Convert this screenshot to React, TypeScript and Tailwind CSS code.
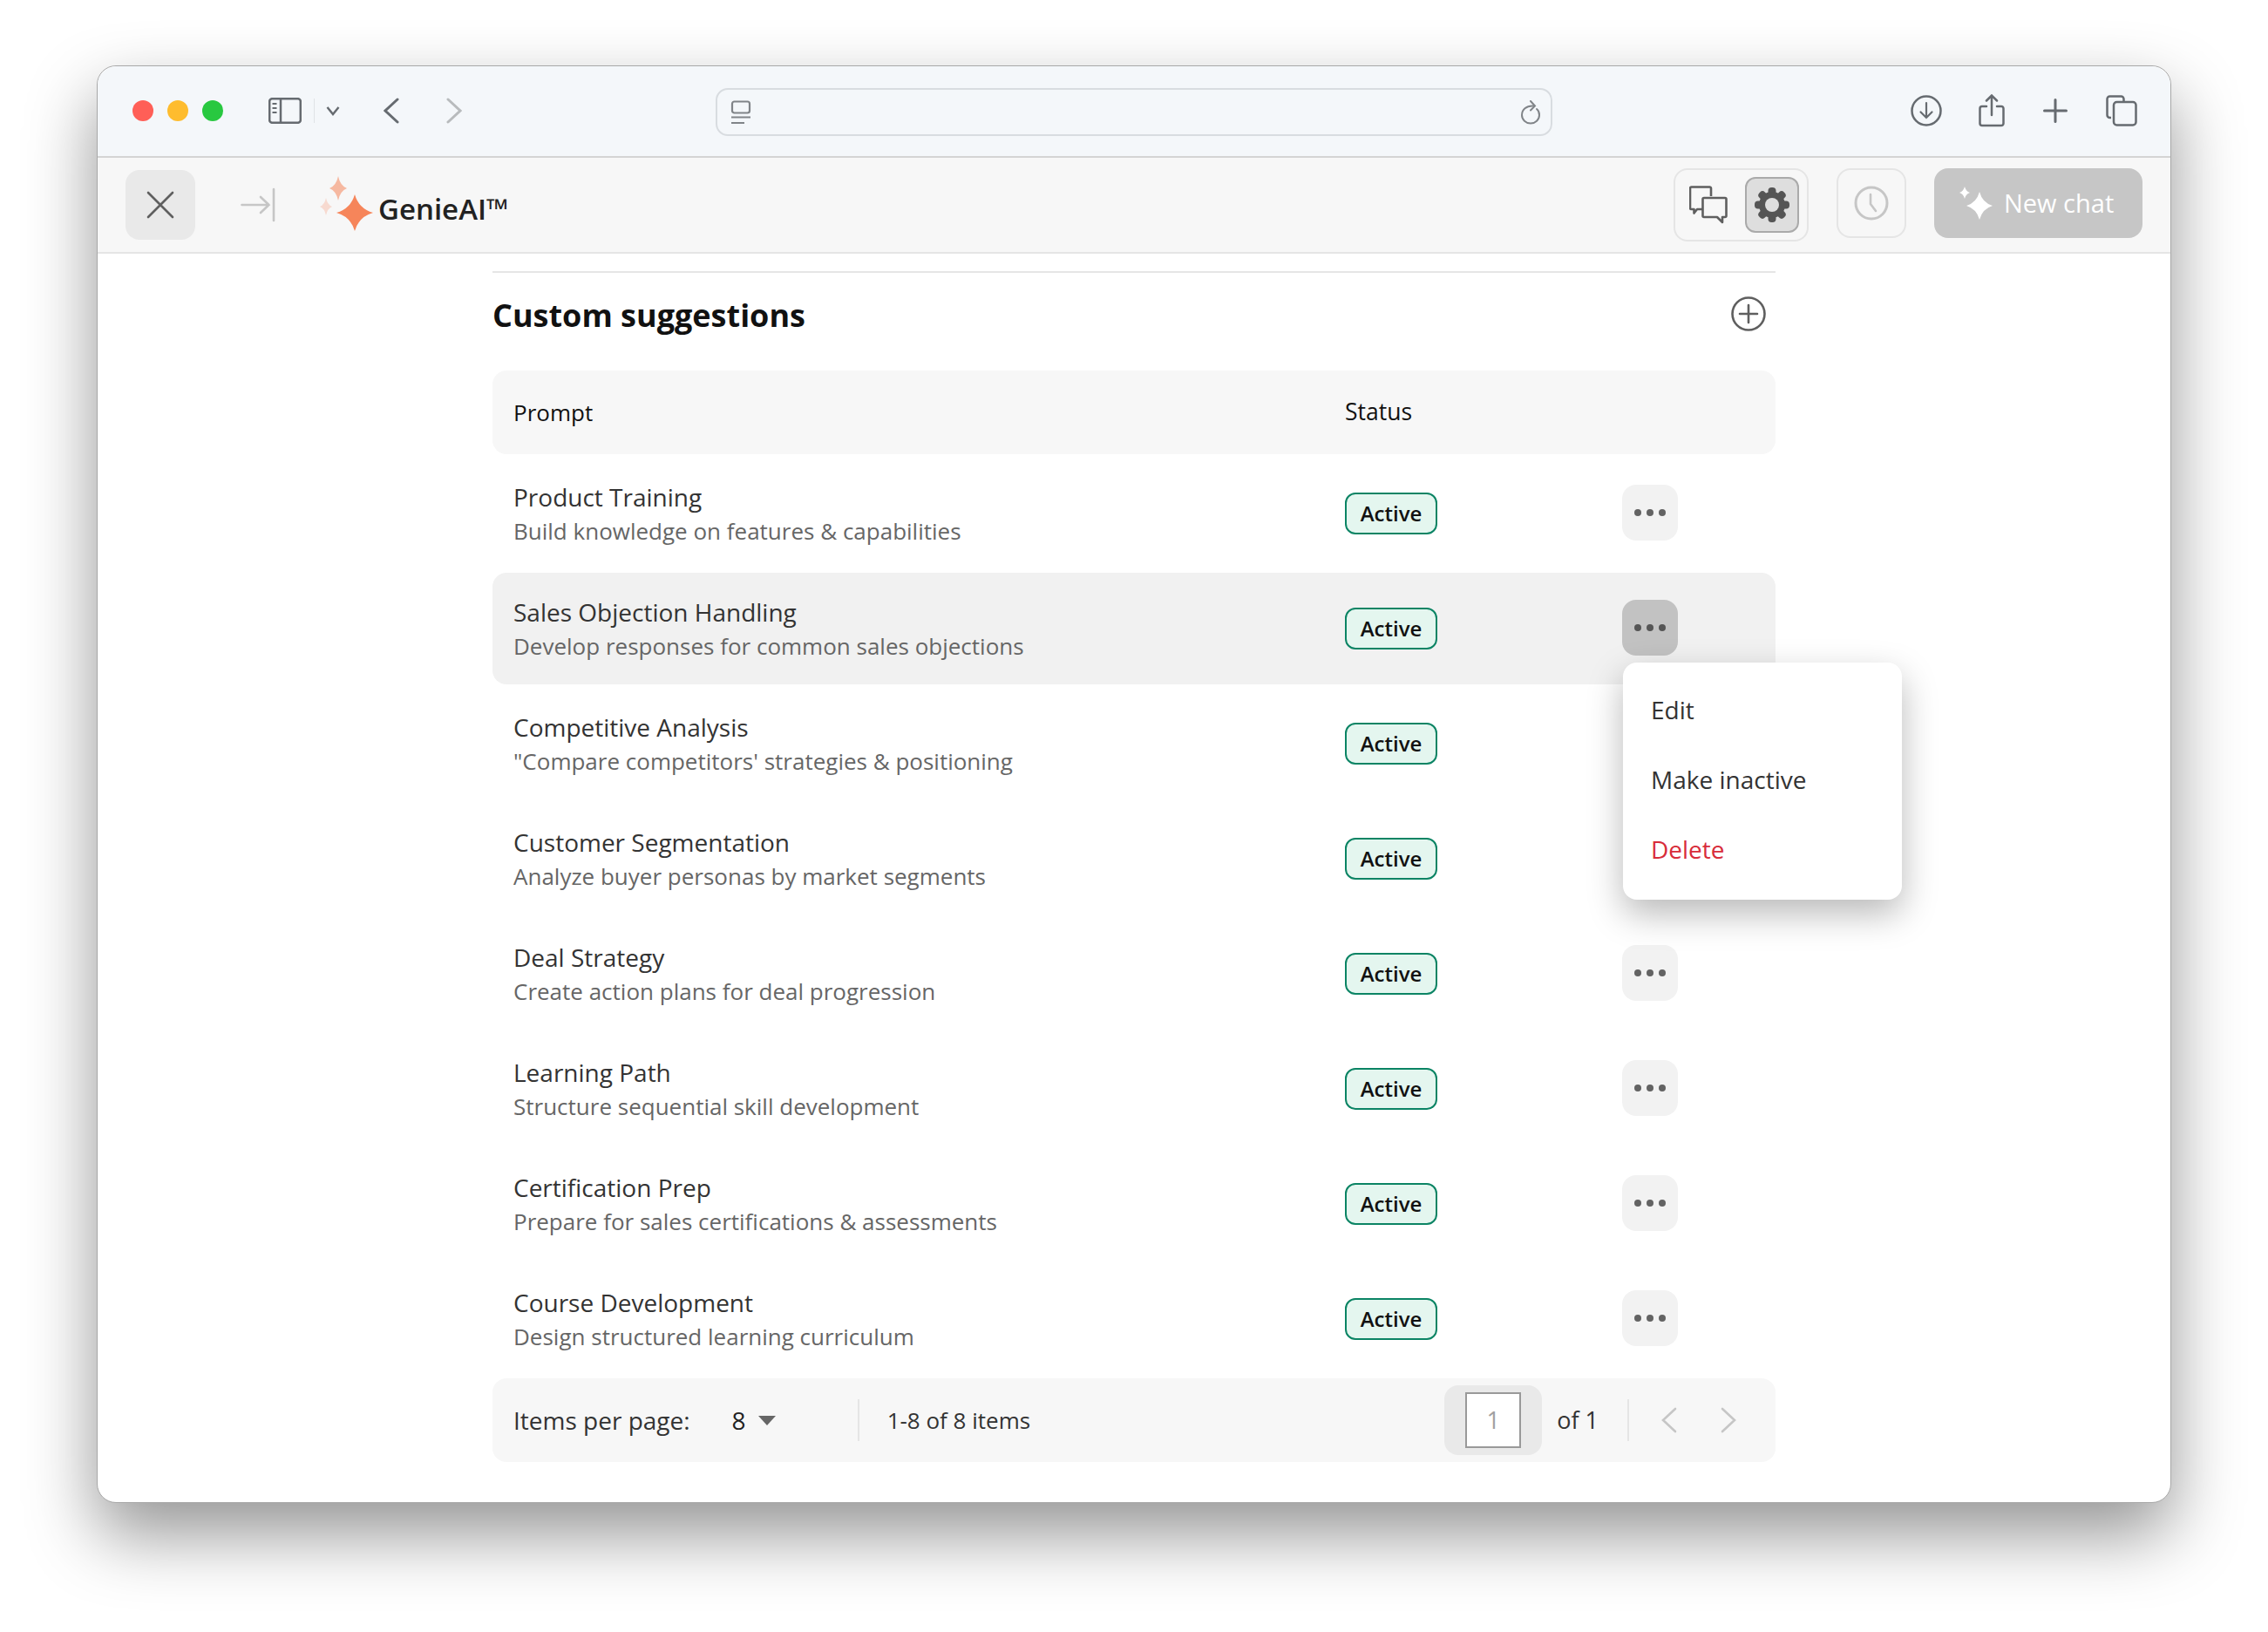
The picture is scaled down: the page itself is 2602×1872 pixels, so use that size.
import React from "react";

function Star({ cx, cy, r, ry, fill, opacity = 1 }: { cx: number; cy: number; r: number; ry?: number; fill: string; opacity?: number }) {
  const v = ry ?? r;
  const kx = r * 0.22;
  const ky = v * 0.22;
  return (
    <path
      d={`M${cx} ${cy - v}Q${cx + kx} ${cy - ky} ${cx + r} ${cy}Q${cx + kx} ${cy + ky} ${cx} ${cy + v}Q${cx - kx} ${cy + ky} ${cx - r} ${cy}Q${cx - kx} ${cy - ky} ${cx} ${cy - v}Z`}
      fill={fill}
      opacity={opacity}
    />
  );
}

const rows = [
  ["Product Training", "Build knowledge on features & capabilities"],
  ["Sales Objection Handling", "Develop responses for common sales objections"],
  ["Competitive Analysis", "\"Compare competitors' strategies & positioning"],
  ["Customer Segmentation", "Analyze buyer personas by market segments"],
  ["Deal Strategy", "Create action plans for deal progression"],
  ["Learning Path", "Structure sequential skill development"],
  ["Certification Prep", "Prepare for sales certifications & assessments"],
  ["Course Development", "Design structured learning curriculum"],
];

function Dots({ color }: { color: string }) {
  return (
    <svg width="36" height="10" viewBox="0 0 36 10">
      <circle cx="4" cy="5" r="4" fill={color} />
      <circle cx="18" cy="5" r="4" fill={color} />
      <circle cx="32" cy="5" r="4" fill={color} />
    </svg>
  );
}

function Gear() {
  const angles = [0, 45, 90, 135, 180, 225, 270, 315];
  return (
    <svg width="42" height="42" viewBox="0 0 42 42">
      {angles.map((a) => (
        <rect key={a} x="16.5" y="1" width="9" height="12" rx="4" fill="#555555" transform={`rotate(${a} 21 21)`} />
      ))}
      <circle cx="21" cy="21" r="15" fill="#555555" />
      <circle cx="21" cy="21" r="8" fill="#dedede" />
    </svg>
  );
}

function Row({ title, desc, index }: { title: string; desc: string; index: number }) {
  const active = index === 1;
  const hidden = index === 2 || index === 3;
  return (
    <div className={`relative grid h-[128px] grid-cols-[954px_318px_1fr] items-center rounded-2xl px-6 ${active ? "bg-[#f1f1f1]" : ""}`}>
      <div className="flex flex-col pt-[2px]">
        <div className="text-[28px] leading-[39px] text-[#333333]">{title}</div>
        <div className="text-[26px] leading-[39px] text-[#666666]">{desc}</div>
      </div>
      <div className="mb-[1px] flex">
        <span className="flex h-[48px] w-[106px] items-center justify-center rounded-xl border-2 border-[#0b8464] bg-[#e4f6ef] text-[24px] font-semibold text-[#111111]">Active</span>
      </div>
      {!hidden && (
        <div className={`mb-[2px] flex h-[64px] w-[64px] items-center justify-center rounded-2xl ${active ? "bg-[#c2c2c2]" : "bg-[#f2f2f2]"}`}>
          <Dots color={active ? "#555555" : "#636363"} />
        </div>
      )}
      {active && (
        <div className="absolute left-[1297px] top-[103px] z-10 flex w-[320px] flex-col rounded-2xl bg-white pb-[18px] pt-[14px] shadow-[0_16px_40px_rgba(0,0,0,0.28)]">
          <div className="flex h-[80px] items-center pl-8 text-[28px] text-[#333333]">Edit</div>
          <div className="flex h-[80px] items-center pl-8 text-[28px] text-[#333333]">Make inactive</div>
          <div className="flex h-[80px] items-center pl-8 text-[28px] text-[#d82c3a]">Delete</div>
        </div>
      )}
    </div>
  );
}

export default function App() {
  return (
    <div className="h-[1872px] w-[2602px] overflow-hidden bg-white pl-[111px] pt-[75px] font-['Open_Sans',sans-serif]">
      <div className="flex h-[1649px] w-[2380px] flex-col rounded-[22px] border border-[#a8a8a8] bg-white shadow-[0_36px_80px_rgba(0,0,0,0.42)]">
        {/* Safari bar */}
        <div className="relative flex h-[105px] shrink-0 items-center rounded-t-[22px] border-b-2 border-[#d4d4d4] bg-[#f4f7fa] pb-[2px] pl-[40px] pr-[38px]">
          <div className="flex gap-4">
            <span className="h-6 w-6 rounded-full bg-[#ff5f57]" />
            <span className="h-6 w-6 rounded-full bg-[#febc2e]" />
            <span className="h-6 w-6 rounded-full bg-[#28c840]" />
          </div>
          <svg className="ml-[52px]" width="38" height="30" viewBox="0 0 38 30" fill="none" stroke="#666b70" strokeWidth="2.5">
            <rect x="1.2" y="1.2" width="35.6" height="27.6" rx="3" />
            <path d="M14 1v28" />
            <path d="M4.5 7h5M4.5 12h5M4.5 17h5" strokeWidth="1.8" />
          </svg>
          <div className="ml-[14px] h-[28px] w-px bg-[#dfe3e6]" />
          <svg className="ml-[13px]" width="16" height="12" viewBox="0 0 16 12" fill="none" stroke="#666b70" strokeWidth="2.4">
            <path d="M1.5 2l6.5 8 6.5-8" />
          </svg>
          <svg className="ml-[50px]" width="18" height="30" viewBox="0 0 18 30" fill="none" stroke="#666b70" strokeWidth="3" strokeLinecap="round">
            <path d="M16 2L2 15l14 13" />
          </svg>
          <svg className="ml-[54px]" width="18" height="30" viewBox="0 0 18 30" fill="none" stroke="#b8bbbd" strokeWidth="3" strokeLinecap="round">
            <path d="M2 2l14 13L2 28" />
          </svg>
          <div className="absolute left-[709px] top-[25px] flex h-[55px] w-[960px] items-center justify-between rounded-[14px] border-2 border-[#d8dce0] pl-[15px] pr-[11px]">
            <svg width="24" height="28" viewBox="0 0 24 28" fill="none" stroke="#808488" strokeWidth="2.2">
              <rect x="2" y="1.5" width="20" height="13" rx="2.5" />
              <path d="M1 19.5h22M1 26h15" />
            </svg>
            <svg width="24" height="28" viewBox="0 0 24 28" fill="none" stroke="#808488" strokeWidth="2" strokeLinecap="round">
              <path d="M15 6.5C7 6 2 11 2 17a10 9.5 0 0 0 20 0c0-3-1-5.5-3-7" />
              <path d="M12 1l5 5.5-5 5" />
            </svg>
          </div>
          <div className="ml-auto flex items-center">
            <svg width="36" height="36" viewBox="0 0 36 36" fill="none" stroke="#666b70" strokeWidth="2.5" strokeLinecap="round">
              <circle cx="18" cy="18" r="16.5" />
              <path d="M18 9v17M11.5 19.5L18 26l6.5-6.5" strokeWidth="2.2" />
            </svg>
            <svg className="ml-[42px]" width="30" height="38" viewBox="0 0 30 38" fill="none" stroke="#666b70" strokeWidth="2.5" strokeLinecap="round">
              <path d="M9 14H4a2.5 2.5 0 0 0-2.5 2.5v17A2.5 2.5 0 0 0 4 36h22a2.5 2.5 0 0 0 2.5-2.5v-17A2.5 2.5 0 0 0 26 14h-5" />
              <path d="M15 24V2M9 7.5L15 1.5l6 6" />
            </svg>
            <svg className="ml-[44px]" width="28" height="28" viewBox="0 0 28 28" fill="none" stroke="#666b70" strokeWidth="3" strokeLinecap="round">
              <path d="M14 1.5v25M1.5 14h25" />
            </svg>
            <svg className="ml-[44px]" width="36" height="36" viewBox="0 0 36 36" fill="none" stroke="#666b70" strokeWidth="2.5">
              <path d="M6 26H4.5A3 3 0 0 1 1.5 23V4.5a3 3 0 0 1 3-3h13a3 3 0 0 1 3 3V8" />
              <rect x="9" y="8" width="25.5" height="26.5" rx="3.5" />
            </svg>
          </div>
        </div>

        {/* App header */}
        <div className="flex h-[110px] shrink-0 items-center border-b-2 border-[#e5e5e5] bg-[#f7f7f7] pl-[32px] pr-[32px]">
          <div className="flex h-[80px] w-[80px] items-center justify-center rounded-2xl bg-[#e9e9e9]">
            <svg width="32" height="32" viewBox="0 0 32 32" fill="none" stroke="#5f5f5f" strokeWidth="2.6" strokeLinecap="round">
              <path d="M2 2l28 28M30 2L2 30" />
            </svg>
          </div>
          <svg className="ml-[52px]" width="40" height="40" viewBox="0 0 40 40" fill="none" stroke="#c6c6c6" strokeWidth="2.6" strokeLinecap="round">
            <path d="M1.5 20h31M23 11l9.5 9-9.5 9" />
            <path d="M38 2v36" />
          </svg>
          <svg className="ml-[45px] mt-[2px]" width="76" height="76" viewBox="0 0 76 76">
            <Star cx={46} cy={46} r={21} ry={21} fill="#f6855a" />
            <Star cx={27} cy={18} r={10} ry={14} fill="#f6855a" opacity={0.55} />
            <Star cx={13} cy={39} r={7} ry={10} fill="#f6855a" opacity={0.25} />
          </svg>
          <div className="ml-[-3px] mt-[8px] text-[33px] font-semibold leading-none text-[#222222]">GenieAI™</div>
          <div className="ml-auto flex items-start gap-[32px] self-start pt-[12px]">
            <div className="flex h-[84px] w-[155px] items-center justify-between rounded-2xl border-2 border-[#e5e5e5] pl-[16px] pr-[9px]">
              <svg width="44" height="44" viewBox="0 0 44 44" fill="none" stroke="#5f5f5f" strokeWidth="2.6" strokeLinejoin="round">
                <path d="M15 27H9l-3.5 4.5V27H2.5A1.5 1.5 0 0 1 1 25.5V3a1.5 1.5 0 0 1 1.5-1.5h21A1.5 1.5 0 0 1 25 3v9" />
                <path d="M17 14h24a1.5 1.5 0 0 1 1.5 1.5v19a1.5 1.5 0 0 1-1.5 1.5h-3v6l-6-6H17a1.5 1.5 0 0 1-1.5-1.5v-19A1.5 1.5 0 0 1 17 14z" />
              </svg>
              <div className="flex h-[64px] w-[62px] items-center justify-center rounded-xl border-2 border-[#aaaaaa] bg-[#dedede]">
                <Gear />
              </div>
            </div>
            <div className="flex h-[80px] w-[80px] items-center justify-center rounded-2xl border-2 border-[#e5e5e5]">
              <svg width="40" height="40" viewBox="0 0 40 40" fill="none" stroke="#c6c6c6" strokeWidth="3" strokeLinecap="round" strokeLinejoin="round">
                <circle cx="20" cy="20" r="18" />
                <path d="M19 10v11l6 8" strokeWidth="2.6" />
              </svg>
            </div>
            <div className="flex h-[80px] w-[239px] items-center rounded-2xl bg-[#c6c6c6] pl-[28px] text-white">
              <svg width="40" height="38" viewBox="0 0 40 38">
                <Star cx={24} cy={22} r={15} ry={16} fill="#ffffff" />
                <Star cx={7} cy={7} r={6} ry={7} fill="#ffffff" />
              </svg>
              <span className="mb-[2px] ml-[12px] text-[29px] leading-none">New chat</span>
            </div>
          </div>
        </div>

        {/* Content */}
        <div className="mx-auto flex w-[1472px] flex-col pt-[20px]">
          <div className="h-[2px] bg-[#e5e5e5]" />
          <div className="flex h-[112px] items-center justify-between pr-[11px]">
            <h2 className="mb-[14px] text-[36px] font-bold text-[#111111]">Custom suggestions</h2>
            <svg className="mb-[18px]" width="40" height="40" viewBox="0 0 40 40" fill="none" stroke="#5f5f5f" strokeWidth="2.6" strokeLinecap="round">
              <circle cx="20" cy="20" r="18.5" />
              <path d="M20 10v20M10 20h20" />
            </svg>
          </div>
          <div className="grid h-[96px] grid-cols-[954px_1fr] items-center rounded-2xl bg-[#f7f7f7] px-6 text-[26px] text-[#111111]">
            <div>Prompt</div>
            <div className="text-[26.5px]">Status</div>
          </div>
          <div className="mt-1 flex flex-col gap-1">
            {rows.map((r, i) => (
              <Row key={r[0]} title={r[0]} desc={r[1]} index={i} />
            ))}
          </div>
          <div className="mt-1 flex h-[96px] items-center rounded-2xl bg-[#f7f7f7] pl-6 text-[#333333]">
            <span className="text-[28px]">Items per page:</span>
            <span className="ml-[48px] text-[28px] text-[#222222]">8</span>
            <svg className="ml-[14px]" width="20" height="12" viewBox="0 0 20 12"><path d="M0 1h20L10 12z" fill="#666666" /></svg>
            <div className="ml-[94px] h-[48px] w-[2px] bg-[#e5e5e5]" />
            <span className="ml-[32px] text-[26px]">1-8 of 8 items</span>
            <div className="ml-auto flex h-[80px] w-[112px] items-center justify-center rounded-2xl bg-[#e9e9e9]">
              <div className="flex h-[64px] w-[64px] items-center justify-center border-2 border-[#999999] bg-white text-[27px] text-[#a0a0a0]">1</div>
            </div>
            <span className="ml-[17px] text-[27px]">of 1</span>
            <div className="ml-[33px] h-[48px] w-[2px] bg-[#e5e5e5]" />
            <svg className="ml-[37px]" width="18" height="30" viewBox="0 0 18 30" fill="none" stroke="#c6c6c6" strokeWidth="2.6" strokeLinecap="round"><path d="M16 2L2 15l14 13" /></svg>
            <svg className="ml-[50px] mr-[45px]" width="18" height="30" viewBox="0 0 18 30" fill="none" stroke="#c6c6c6" strokeWidth="2.6" strokeLinecap="round"><path d="M2 2l14 13L2 28" /></svg>
          </div>
        </div>
      </div>
    </div>
  );
}
